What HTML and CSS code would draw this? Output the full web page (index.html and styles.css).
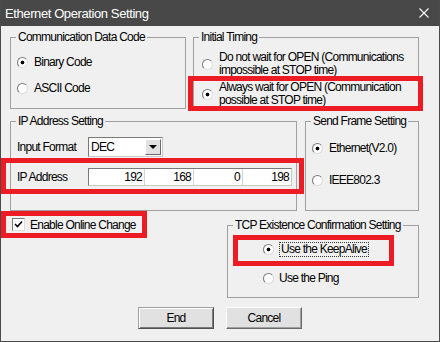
FILE: index.html
```html
<!DOCTYPE html>
<html lang="en">
<head>
  <meta charset="UTF-8">
  <title>Ethernet Operation Setting</title>
  <link rel="stylesheet" href="styles.css">
</head>
<body>
  <div class="window">
    <div class="titlebar">
      <span class="title">Ethernet Operation Setting</span>
      <svg class="close" width="10" height="10" viewBox="0 0 10 10">
        <path d="M0.5 0.5 L9.5 9.5 M9.5 0.5 L0.5 9.5" stroke="#fff" stroke-width="1.1" fill="none"/>
      </svg>
    </div>

    <div class="content">
      <div class="row row-top">
        <fieldset class="group group-code">
          <legend>Communication Data Code</legend>
          <div class="option"><span class="radio checked"></span>Binary Code</div>
          <div class="option"><span class="radio"></span>ASCII Code</div>
        </fieldset>

        <fieldset class="group group-timing">
          <legend>Initial Timing</legend>
          <div class="option"><span class="radio"></span><span>Do not wait for OPEN (Communications<br>impossible at STOP time)</span></div>
          <div class="option"><span class="radio checked"></span><span>Always wait for OPEN (Communication<br>possible at STOP time)</span></div>
        </fieldset>
      </div>

      <div class="row row-mid">
        <fieldset class="group group-ip">
          <legend>IP Address Setting</legend>
          <div class="field field-format">
            <span class="field-label">Input Format</span>
            <div class="select">
              <span class="select-value">DEC</span>
              <span class="drop"></span>
            </div>
          </div>
          <div class="field field-ip">
            <span class="field-label">IP Address</span>
            <div class="ip">
              <span>192</span>
              <span>168</span>
              <span>0</span>
              <span>198</span>
            </div>
          </div>
        </fieldset>

        <fieldset class="group group-frame">
          <legend>Send Frame Setting</legend>
          <div class="option"><span class="radio checked"></span>Ethernet(V2.0)</div>
          <div class="option"><span class="radio"></span>IEEE802.3</div>
        </fieldset>
      </div>

      <div class="row row-low">
        <div class="check-row">
          <span class="checkbox">
            <svg width="9" height="9" viewBox="0 0 9 9"><path d="M1 4 L3.5 6.5 L8 1.5" stroke="#000" stroke-width="1.6" fill="none"/></svg>
          </span>
          Enable Online Change
        </div>

        <fieldset class="group group-tcp">
          <legend>TCP Existence Confirmation Setting</legend>
          <div class="option"><span class="radio checked"></span><span class="focus">Use the KeepAlive</span></div>
          <div class="option"><span class="radio"></span>Use the Ping</div>
        </fieldset>
      </div>

      <div class="buttons">
        <button class="btn btn-default">End</button>
        <button class="btn">Cancel</button>
      </div>
    </div>

    <!-- red annotation boxes -->
    <div class="mark mark-timing"></div>
    <div class="mark mark-ip"></div>
    <div class="mark mark-online"></div>
    <div class="mark mark-tcp"></div>
  </div>
</body>
</html>
```

FILE: styles.css
```css
* {
  margin: 0;
  padding: 0;
  box-sizing: border-box;
}

body {
  background: #f0f0f0;
  font-family: 'Liberation Sans', Arial, sans-serif;
  font-size: 12px;
  letter-spacing: -0.75px;
  color: #000;
}

.window {
  position: relative;
  width: 440px;
  height: 342px;
  background: #f0f0f0;
  border: 1px solid #4a4a4a;
  border-top: none;
}

.titlebar {
  height: 26px;
  background: #484848;
  display: flex;
  align-items: center;
  justify-content: space-between;
  padding: 0 10px 0 4px;
  color: #fff;
}

.title {
  font-size: 13px;
  letter-spacing: -0.4px;
}

.content {
  padding: 4px 20px 0 9px;
}

.row {
  display: flex;
  justify-content: space-between;
}

.row-mid {
  margin-top: 5px;
}

.row-low {
  margin-top: 7px;
  align-items: flex-start;
}

/* group boxes */
.group {
  border: 1px solid #a0a0a0;
  padding: 0 0 0 5px;
  margin: 0;
  min-width: 0;
}

.group legend {
  padding: 0 2px;
  line-height: 14px;
}

.group-code {
  width: 176px;
  height: 79px;
  padding-top: 5px;
}

.group-timing {
  width: 226px;
  height: 79px;
  padding-top: 7px;
}

.group-ip {
  width: 287px;
  height: 97px;
  padding-top: 9px;
}

.group-frame {
  width: 114px;
  height: 97px;
  padding-top: 10px;
}

.group-tcp {
  width: 192px;
  height: 80px;
  padding-top: 7px;
}

/* radio options */
.option {
  display: flex;
  align-items: center;
  gap: 6px;
  line-height: 13px;
}

.group-code .option {
  height: 26px;
  margin-left: 1px;
}

.group-timing .option {
  height: 26px;
  margin-left: 3px;
  margin-bottom: 4px;
}

.group-frame .option {
  height: 20px;
  margin-left: 1px;
  margin-bottom: 12px;
}

.group-tcp .option {
  height: 20px;
  margin-left: 30px;
  margin-bottom: 9px;
  gap: 5px;
}

.radio {
  flex: none;
  width: 11px;
  height: 11px;
  border-radius: 50%;
  border: 1px solid;
  border-color: #7a7a7a #dcdcdc #dcdcdc #7a7a7a;
  background: #fff;
}

.radio.checked {
  background: radial-gradient(circle, #000 0, #000 1.6px, #fff 2.2px);
}

.focus {
  border: 1px dotted #333;
  padding: 0 1px;
  line-height: 13px;
}

/* ip settings */
.field {
  display: flex;
  align-items: center;
  margin-left: 1px;
}

.field-label {
  width: 71px;
}

.field-format {
  height: 20px;
}

.field-ip {
  height: 18px;
  margin-top: 11px;
}

.select {
  display: flex;
  width: 75px;
  height: 20px;
  background: #fff;
  border: 1px solid;
  border-color: #7a7a7a #c8c8c8 #c8c8c8 #7a7a7a;
}

.select-value {
  flex: 1;
  padding-left: 2px;
  line-height: 18px;
}

.drop {
  width: 16px;
  margin: 1px;
  background: #e1e1e1;
  border: 1px solid;
  border-color: #fff #6a6a6a #6a6a6a #fff;
  display: flex;
  align-items: center;
  justify-content: center;
}

.drop::before {
  content: "";
  border-left: 4px solid transparent;
  border-right: 4px solid transparent;
  border-top: 4px solid #000;
}

.ip {
  display: grid;
  grid-template-columns: 55px 49px 49px 49px;
  width: 204px;
  height: 18px;
  background: #fff;
  border: 1px solid;
  border-color: #7a7a7a #c8c8c8 #c8c8c8 #7a7a7a;
}

.ip span {
  text-align: right;
  padding-right: 2px;
  line-height: 16px;
}

.ip span + span {
  border-left: 1px solid #d4d4d4;
}

/* online change */
.check-row {
  display: flex;
  align-items: center;
  gap: 5px;
  height: 13px;
  margin-left: 2px;
}

.checkbox {
  width: 13px;
  height: 13px;
  background: #fff;
  border: 1px solid;
  border-color: #7a7a7a #dcdcdc #dcdcdc #7a7a7a;
  display: flex;
  align-items: center;
  justify-content: center;
}

/* buttons */
.buttons {
  display: flex;
  justify-content: center;
  gap: 12px;
  margin-top: 9px;
  padding-left: 11px;
}

.btn {
  width: 76px;
  height: 22px;
  background: #e1e1e1;
  border: 1px solid;
  border-color: #fff #6a6a6a #6a6a6a #fff;
  box-shadow: inset -1px -1px 0 #a0a0a0;
  font-family: inherit;
  font-size: 12px;
  letter-spacing: -0.75px;
  color: #000;
}

.btn-default {
  border-color: #a0a0a0 #505050 #505050 #a0a0a0;
  box-shadow: inset 1px 1px 0 #fff, inset -1px -1px 0 #7a7a7a;
}

/* red highlight marks drawn over the dialog */
.mark {
  position: absolute;
  border: 5px solid #ed1c24;
}

.mark-timing {
  left: 187px;
  top: 76px;
  width: 235px;
  height: 35px;
}

.mark-ip {
  left: 0;
  top: 158px;
  width: 303px;
  height: 36px;
}

.mark-online {
  left: 0;
  top: 211px;
  width: 146px;
  height: 27px;
}

.mark-tcp {
  left: 232px;
  top: 235px;
  width: 161px;
  height: 31px;
}
```
